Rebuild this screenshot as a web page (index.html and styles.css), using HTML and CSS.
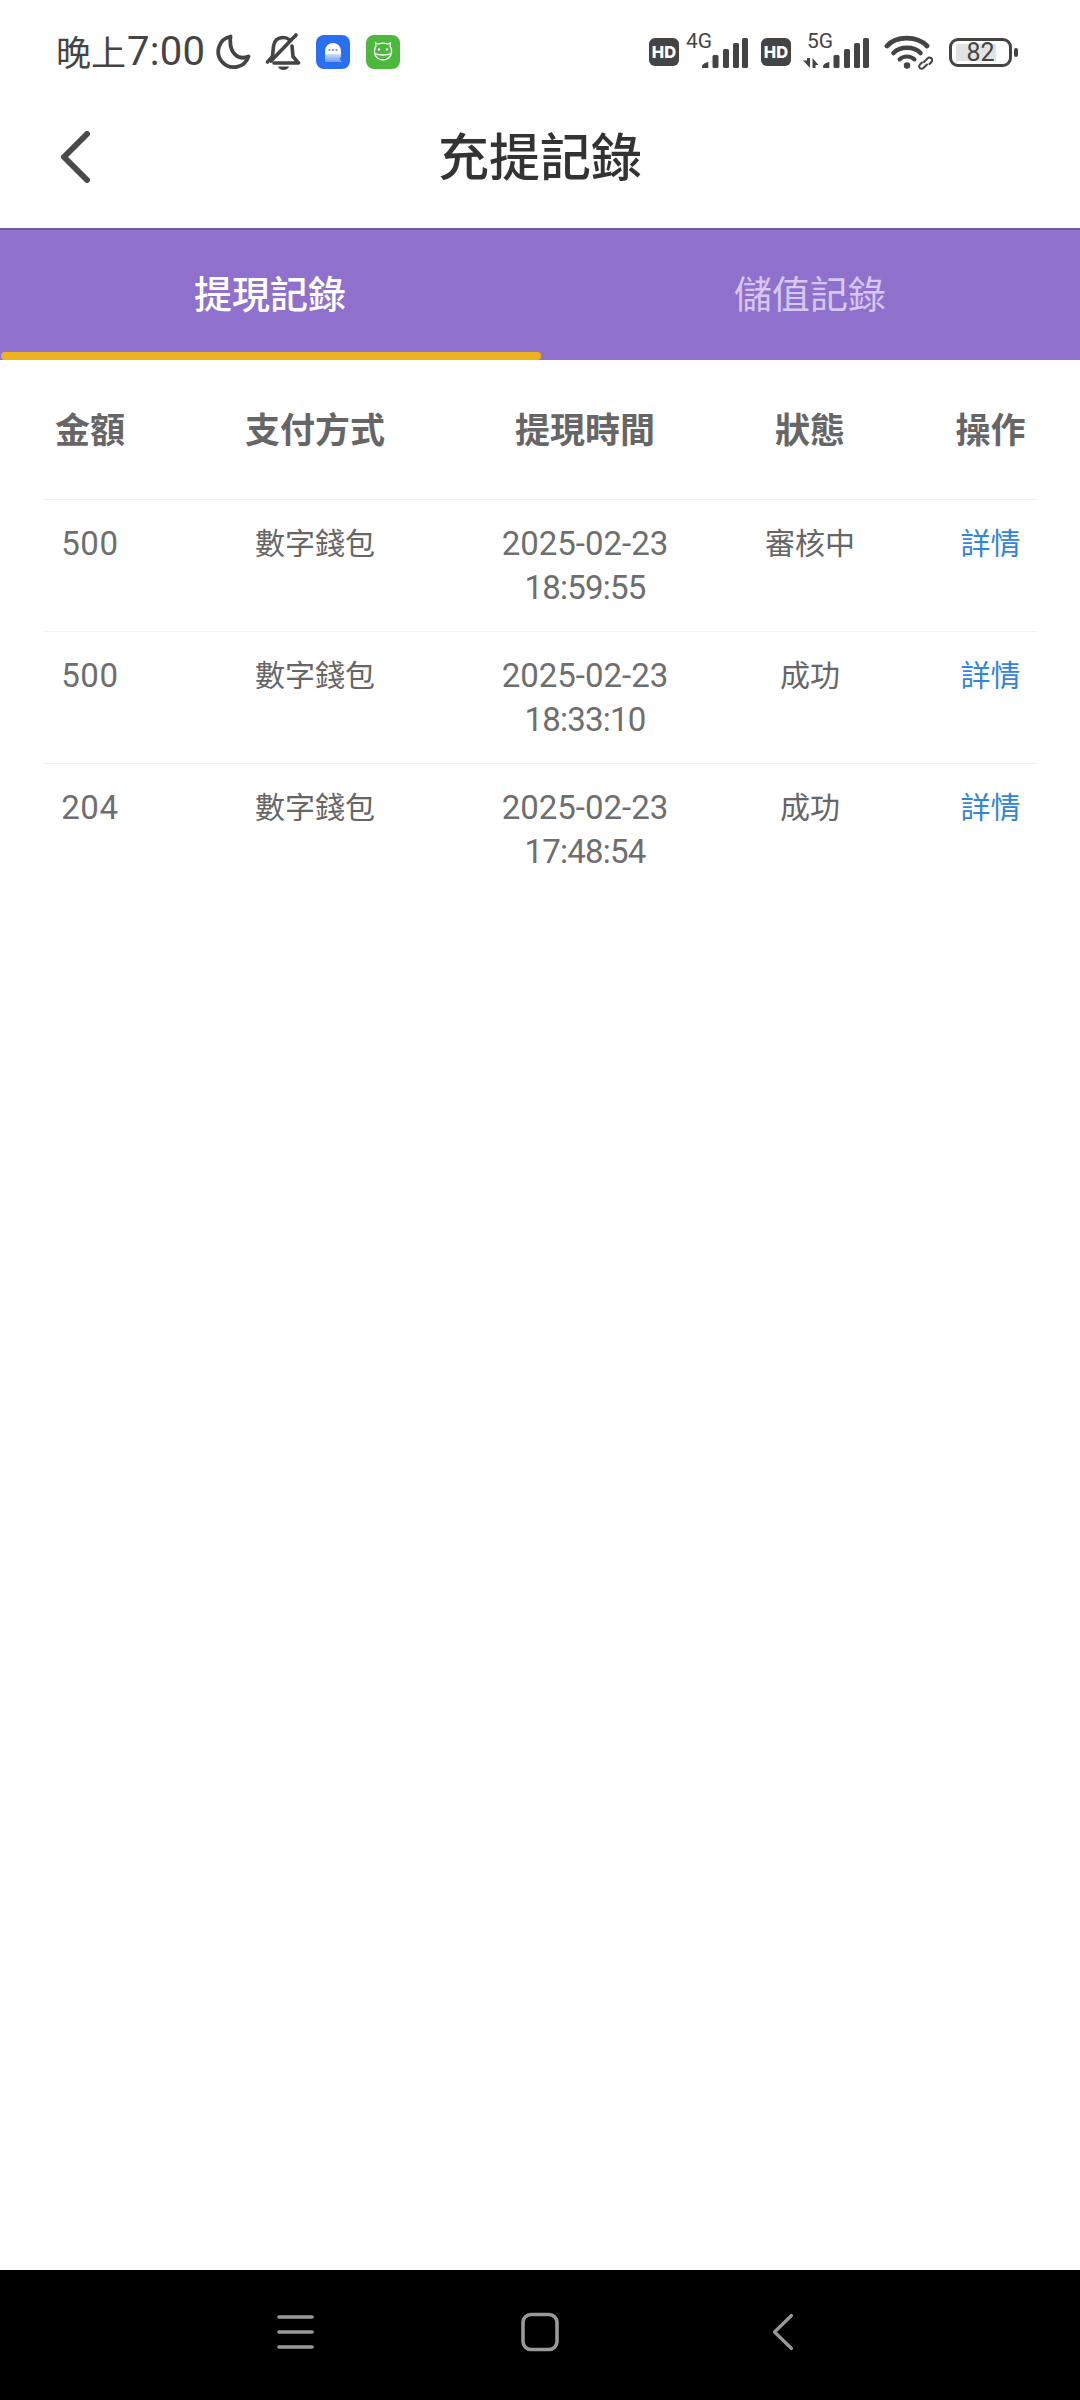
FILE: index.html
```html
<!DOCTYPE html>
<html lang="zh-Hant">
    <head>
        <meta charset="utf-8">
        <title>充提記錄</title>
        <link rel="stylesheet" href="styles.css">
    </head>
    <body>
        <div class="page">
            <div class="status-bar">
                <div class="status-left">
                    <span class="clock-cjk">晚上</span><span class="clock-num">7:00</span>
                    <svg class="moon" width="36" height="40" viewBox="0 0 36 40"><path d="M15.500 4.500A15.500 15.500 0 1 0 33.500 24.500C24 28.500 13.500 22 15.500 4.500Z" fill="none" stroke="#444" stroke-width="3.800" stroke-linejoin="round"/></svg>
                    <svg class="bell" width="36" height="40" viewBox="0 0 36 40"><path d="M2.500 30L7.500 24.500L8.500 14C9.500 8 13.500 5.500 18 5.500C20.500 5.500 22.500 6 24 7.500M27 14L28 24.500L33.500 31H9" fill="none" stroke="#444" stroke-width="3.600" stroke-linecap="round" stroke-linejoin="round"/><path d="M6 29L31 3" stroke="#444" stroke-width="3.600" stroke-linecap="round"/><path d="M13 34.500H24C23 39 14 39 13 34.500Z" fill="#444"/></svg>
                    <svg class="app-blue" width="34" height="40" viewBox="0 0 34 40"><defs><linearGradient id="bubble" x1="0" y1="0" x2="0" y2="1"><stop offset="0.55" stop-color="#fff"/><stop offset="0.62" stop-color="#c3d6fa"/><stop offset="1" stop-color="#6f9cf5"/></linearGradient></defs><rect y="3" width="34" height="34" rx="8" fill="#2a6ff2"/><path d="M9 19A8 8 0 0 1 25 19V24C25 25.500 24.300 26 23.500 26.500L26 30H9Z" fill="url(#bubble)"/><circle cx="13.500" cy="18" r="1.100" fill="#5b8cf0"/><circle cx="17" cy="18" r="1.100" fill="#5b8cf0"/><circle cx="20.500" cy="18" r="1.100" fill="#5b8cf0"/></svg>
                    <svg class="app-green" width="34" height="40" viewBox="0 0 34 40"><rect y="3" width="34" height="34" rx="8" fill="#4db83e"/><g fill="none" stroke="#fff" stroke-width="1.300"><path d="M10 14L9.500 11L12.500 12C15 11 19 11 21.500 12L24.500 11L24 14C25.500 16 26 18 25.500 21C25 25 21 28 17 28C13 28 9 25 8.500 21C8 18 8.500 16 10 14Z"/><path d="M8.700 21.500C13 23.500 21 23.500 25.300 21.500"/></g><circle cx="13" cy="17.500" r="1.200" fill="#fff"/><circle cx="21" cy="17.500" r="1.200" fill="#fff"/></svg>
                </div>
                <div class="status-right">
                    <span class="hd">HD</span>
                    <svg class="signal" width="62" height="48" viewBox="0 -4 62 48"><text x="0" y="16" class="net">4G</text><g fill="#444"><path d="M16 34.500C16 32.500 19 30.500 22.300 30V36H17.500C16.500 36 16 35.500 16 34.500Z"/><rect x="26.500" y="23" width="6" height="13" rx="1.500"/><rect x="37" y="17" width="6" height="19" rx="1.500"/><rect x="47" y="11" width="6" height="25" rx="1.500"/><rect x="56" y="6" width="6" height="30" rx="1.500"/></g></svg>
                    <span class="hd hd-second">HD</span>
                    <svg class="signal-5g" width="66" height="48" viewBox="0 -4 66 48"><text x="4" y="16" class="net">5G</text><g fill="#444"><path d="M0 28.500H4V26H7V36Z"/><path d="M9.500 26L15.500 33H12.500V36H9.500Z"/><path d="M20 34.500C20 32.500 23 30.500 26.300 30V36H21.500C20.500 36 20 35.500 20 34.500Z"/><rect x="30.500" y="23" width="6" height="13" rx="1.500"/><rect x="41" y="17" width="6" height="19" rx="1.500"/><rect x="51" y="11" width="6" height="25" rx="1.500"/><rect x="60" y="6" width="6" height="30" rx="1.500"/></g></svg>
                    <svg class="wifi" width="49" height="40" viewBox="0 0 49 40"><g fill="none" stroke="#444" stroke-linecap="round"><path d="M3 14C12 3.500 33 3.500 43 14" stroke-width="4.800"/><path d="M9.500 21C16 14 30 14 36.500 21" stroke-width="4.500"/><path d="M15.500 27.500C19.500 23.500 26.500 23.500 30.500 27.500" stroke-width="4"/></g><circle cx="23" cy="33.500" r="3.200" fill="#444"/><g fill="none" stroke="#444" stroke-width="2" stroke-linecap="round"><path d="M40 30L43.500 26.500C46 24 50 27.500 47.500 30L45.500 32"/><path d="M43 32.500L39.500 36C37 38 33.500 35 36 32.500L38 30.500"/></g></svg>
                    <div class="battery">
                        <div class="battery-body"><span class="battery-fill"></span><span class="battery-text">82</span></div>
                        <span class="battery-nub"></span>
                    </div>
                </div>
            </div>
            <header class="app-bar">
                <svg class="back" width="30" height="52" viewBox="0 0 30 52"><path d="M27 3L4 26L27 49" fill="none" stroke="#4a4a4a" stroke-width="6" stroke-linecap="round" stroke-linejoin="round"/></svg>
                <h1>充提記錄</h1>
            </header>
            <nav class="tabs">
                <div class="tab tab-active">提現記錄</div>
                <div class="tab">儲值記錄</div>
            </nav>
            <main class="records">
                <table>
                    <colgroup>
                        <col class="col-amount"><col class="col-method"><col class="col-time"><col class="col-status"><col class="col-action">
                    </colgroup>
                    <thead>
                        <tr><th>金額</th><th>支付方式</th><th>提現時間</th><th>狀態</th><th>操作</th></tr>
                    </thead>
                    <tbody>
                        <tr>
                            <td class="num amount">500</td>
                            <td>數字錢包</td>
                            <td class="num">2025-02-23<br><span class="time">18:59:55</span></td>
                            <td>審核中</td>
                            <td class="detail">詳情</td>
                        </tr>
                        <tr>
                            <td class="num amount">500</td>
                            <td>數字錢包</td>
                            <td class="num">2025-02-23<br><span class="time">18:33:10</span></td>
                            <td>成功</td>
                            <td class="detail">詳情</td>
                        </tr>
                        <tr>
                            <td class="num amount">204</td>
                            <td>數字錢包</td>
                            <td class="num">2025-02-23<br><span class="time">17:48:54</span></td>
                            <td>成功</td>
                            <td class="detail">詳情</td>
                        </tr>
                    </tbody>
                </table>
            </main>
            <footer class="nav-bar">
                <svg width="37" height="40" viewBox="0 0 37 40"><g stroke="#999" stroke-width="3.600" stroke-linecap="round"><path d="M2 5H35"/><path d="M2 20H35"/><path d="M2 35H35"/></g></svg>
                <svg width="38" height="40" viewBox="0 0 38 40"><rect x="2" y="2.500" width="34" height="35" rx="8" fill="none" stroke="#999" stroke-width="3.600"/></svg>
                <svg class="nav-back" width="22" height="40" viewBox="0 0 22 40"><path d="M19.500 3.500L2.500 20L19.500 36.500" fill="none" stroke="#999" stroke-width="3.200" stroke-linecap="round" stroke-linejoin="round"/></svg>
            </footer>
        </div>
    </body>
</html>
```

FILE: styles.css
```css
:root {
    --text-dark: #333;
    --icon-color: #444;
    --text-body: #666;
    --text-digits: #6e6e6e;
    --purple: #8f70cd;
    --purple-edge: #70589f;
    --tab-underline: #ecb31e;
    --tab-muted: #d6c8f0;
    --line-color: #f0f0f0;
    --link-color: #3087d6;
}

body {
    margin: 0;
    background-color: white;
    font-family: "Noto Sans CJK TC", sans-serif;
}

.page {
    display: flex;
    flex-direction: column;
    width: 1080px;
    height: 2400px;
    overflow: hidden;
}

.status-bar {
    display: flex;
    justify-content: space-between;
    align-items: center;
    flex: none;
    height: 68px;
    padding: 18px 62px 0 56px;
    color: var(--icon-color);
}

.status-left, .status-right {
    display: flex;
    align-items: center;
}

.clock-cjk {
    margin-bottom: 3px;
    font-size: 35px;
    line-height: 40px;
}

.clock-num {
    margin-left: 1px;
    font-family: Roboto, sans-serif;
    font-size: 40px;
    line-height: 40px;
    letter-spacing: 0.3px;
}

.moon { margin-left: 10px; }
.bell { margin-left: 14px; }
.app-blue { margin-left: 15px; }
.app-green { margin-left: 16px; }

.hd {
    width: 30px;
    height: 28px;
    border-radius: 6px;
    background-color: var(--icon-color);
    color: white;
    font-family: Inter, sans-serif;
    font-size: 16.500px;
    font-weight: 800;
    line-height: 28px;
    text-align: center;
}

.signal { margin-left: 7px; }
.hd-second { margin-left: 13px; }
.signal-5g { margin-left: 12px; }
.wifi { margin-left: 15px; }

.net {
    font-family: Roboto, sans-serif;
    font-size: 21px;
    fill: var(--icon-color);
}

.battery {
    display: flex;
    align-items: center;
    margin-left: 16px;
}

.battery-body {
    position: relative;
    box-sizing: border-box;
    width: 63px;
    height: 29px;
    border: 3px solid var(--icon-color);
    border-radius: 9px;
}

.battery-fill {
    position: absolute;
    left: 4px;
    top: 3px;
    width: 40px;
    height: 17px;
    background-color: #e2e2e2;
}

.battery-text {
    position: absolute;
    left: 0;
    right: 0;
    top: 0;
    font-family: Roboto, sans-serif;
    font-size: 25px;
    line-height: 23px;
    text-align: center;
}

.battery-nub {
    width: 4px;
    height: 9px;
    margin-left: 2px;
    border-radius: 2px;
    background-color: var(--icon-color);
}

.app-bar {
    position: relative;
    display: flex;
    justify-content: center;
    align-items: center;
    flex: none;
    height: 142px;
}

.back {
    position: absolute;
    left: 60px;
    top: 45px;
}

h1 {
    margin: 0 0 6px;
    color: var(--text-dark);
    font-size: 51px;
    font-weight: 500;
}

.tabs {
    display: flex;
    flex: none;
    box-sizing: border-box;
    height: 132px;
    border-top: 2px solid var(--purple-edge);
    background-color: var(--purple);
}

.tab {
    position: relative;
    flex: 1;
    box-sizing: border-box;
    height: 130px;
    padding-top: 37px;
    color: var(--tab-muted);
    font-size: 38px;
    line-height: 50px;
    text-align: center;
}

.tab-active {
    color: white;
    font-weight: 500;
}

.tab-active::after {
    content: "";
    position: absolute;
    left: 1px;
    right: -1px;
    bottom: 0;
    height: 8px;
    border-radius: 4px;
    background-color: var(--tab-underline);
}

.records {
    flex: 1;
    padding: 0 43px 0 44px;
}

table {
    width: 993px;
    border-collapse: collapse;
    table-layout: fixed;
}

.col-amount { width: 92px; }
.col-method { width: 358px; }
.col-time { width: 182px; }
.col-status { width: 268px; }
.col-action { width: 93px; }

th {
    height: 139px;
    padding: 0 0 3px;
    box-sizing: border-box;
    color: var(--text-body);
    font-size: 35px;
    font-weight: bold;
    white-space: nowrap;
}

td {
    padding: 19px 0 24px;
    border-top: 1px solid var(--line-color);
    color: var(--text-body);
    font-size: 30px;
    line-height: 44px;
    text-align: center;
    vertical-align: top;
    white-space: nowrap;
}

td.num {
    padding: 22px 0 21px;
    color: var(--text-digits);
    font-family: Roboto, sans-serif;
    font-size: 33px;
}

td.amount {
    letter-spacing: 0.7px;
}

.time {
    letter-spacing: -0.8px;
}

td.detail {
    color: var(--link-color);
}

.nav-bar {
    display: flex;
    align-items: center;
    flex: none;
    gap: 207px;
    height: 130px;
    padding: 0 0 6px 277px;
    box-sizing: border-box;
    background-color: black;
}

.nav-back {
    margin-left: 6px;
}
```
